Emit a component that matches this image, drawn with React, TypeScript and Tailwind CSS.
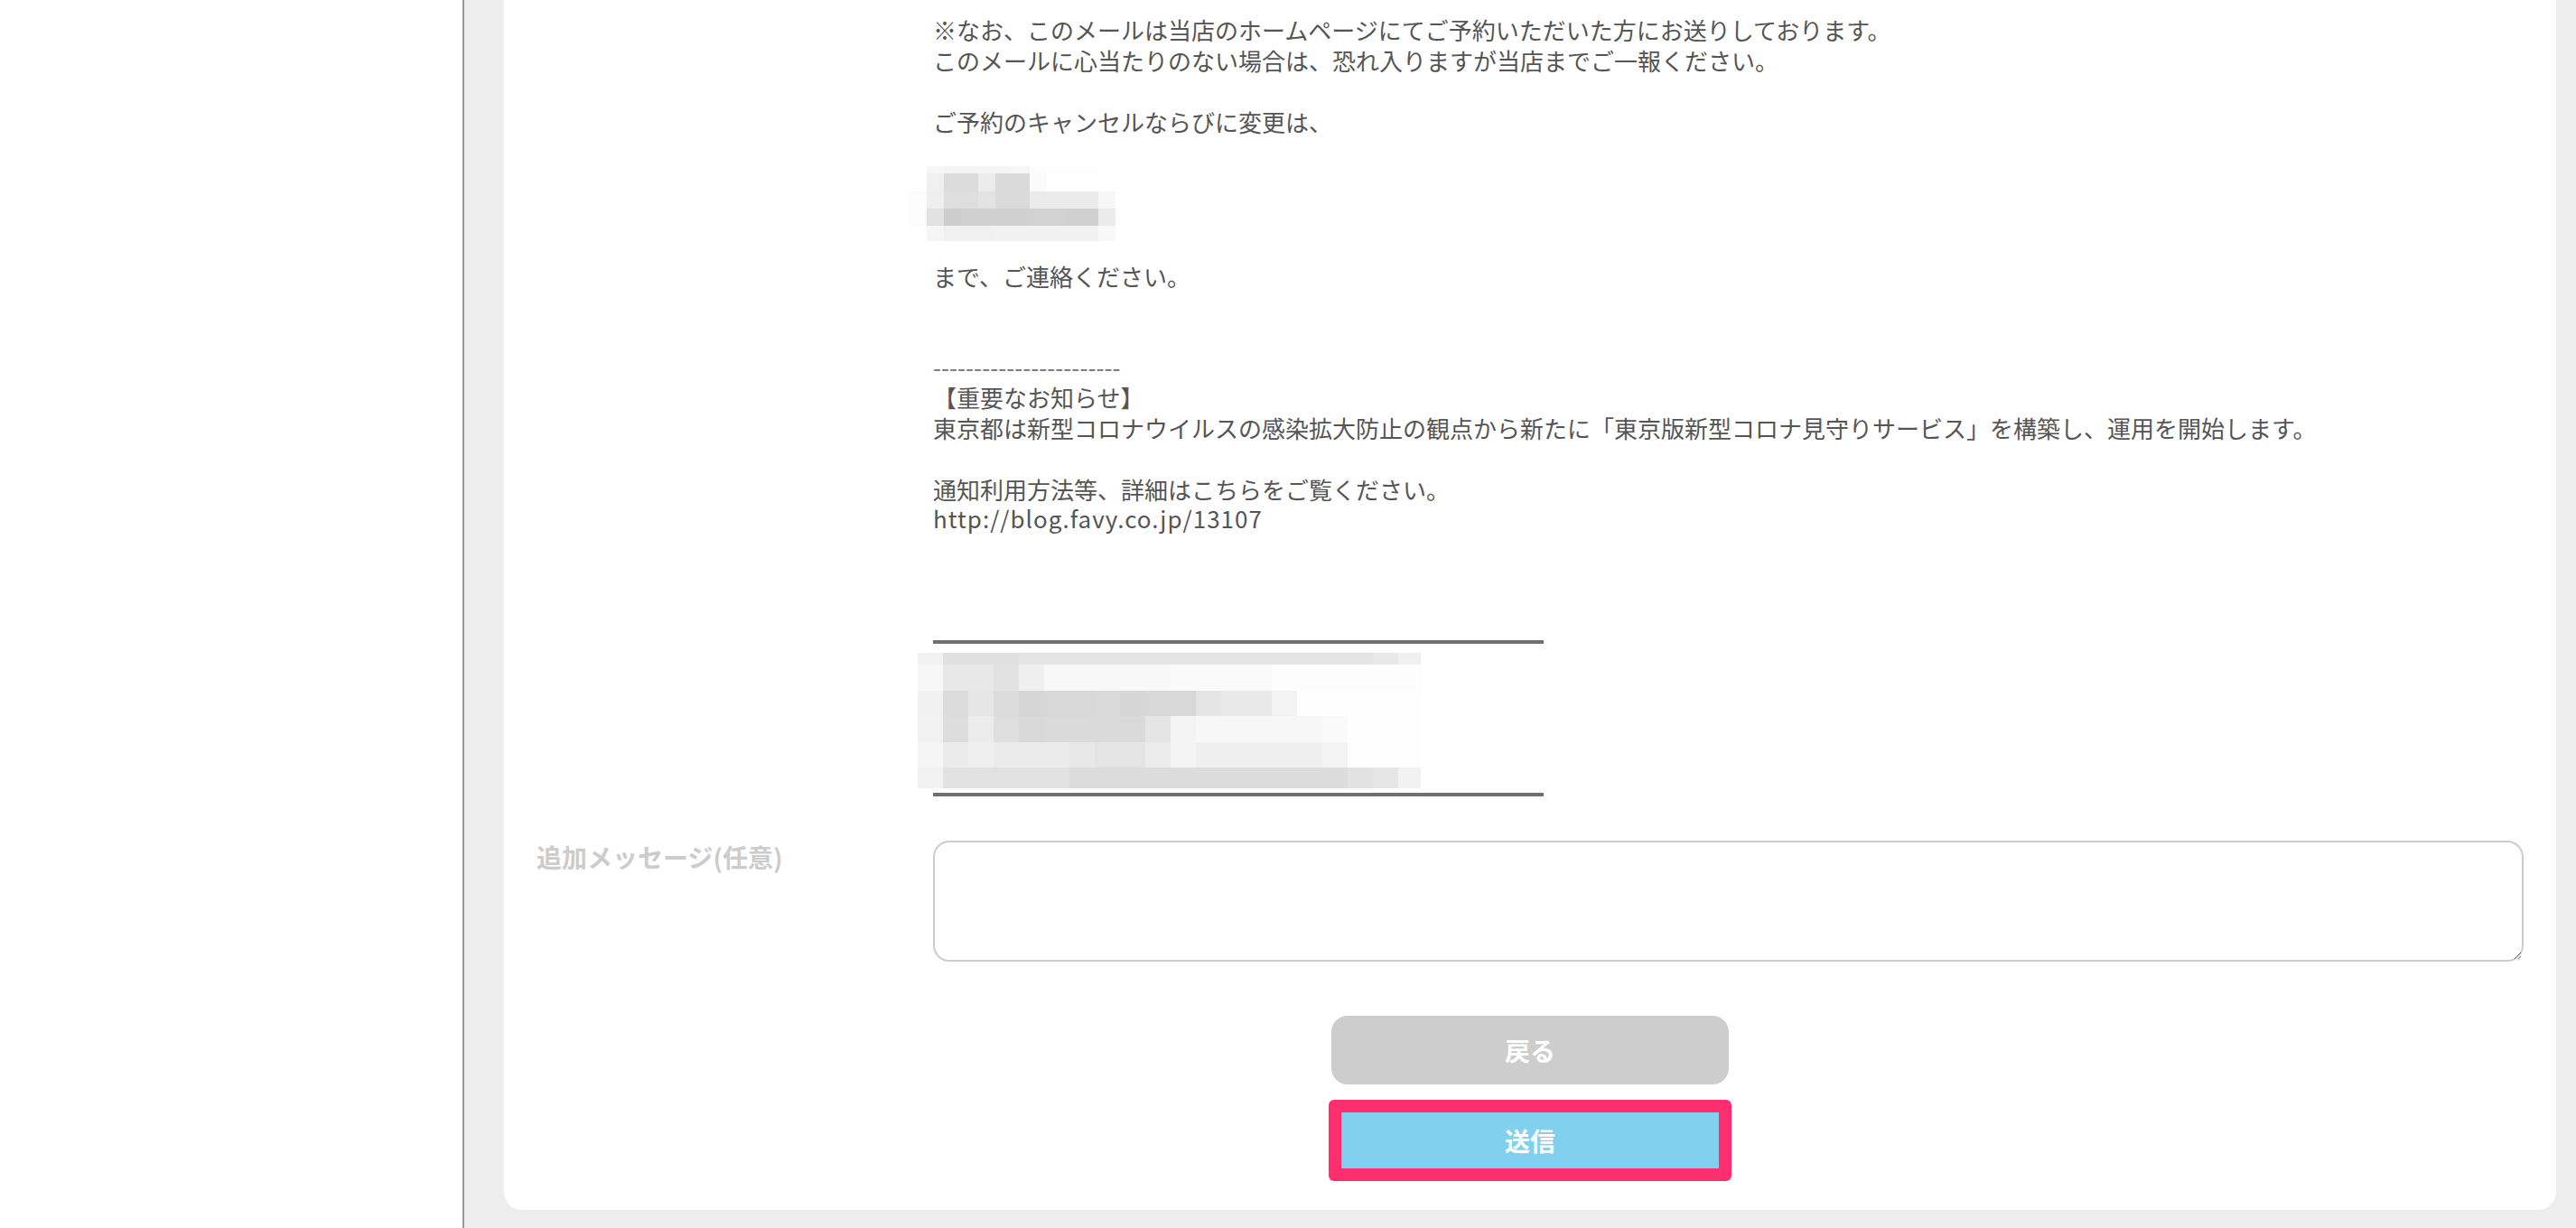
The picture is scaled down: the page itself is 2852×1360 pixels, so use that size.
import React from "react";

const FONT = "font-['Noto_Sans_CJK_JP','Noto_Sans',sans-serif]";

type MosaicProps = {
  cols: number[];
  rows: number[];
  shades: string[][];
  className?: string;
};

// Pixelated redaction block drawn as a grid of grey cells
function Mosaic({ cols, rows, shades, className }: MosaicProps) {
  const width = cols.reduce((a, b) => a + b, 0);
  const height = rows.reduce((a, b) => a + b, 0);
  const cells: React.ReactNode[] = [];
  let y = 0;
  rows.forEach((h, r) => {
    let x = 0;
    cols.forEach((w, c) => {
      const fill = shades[r]?.[c] ?? "#ffffff";
      cells.push(
        <rect key={`${r}-${c}`} x={x} y={y} width={w} height={h} fill={fill} />,
      );
      x += w;
    });
    y += h;
  });
  return (
    <svg
      className={className}
      width={width}
      height={height}
      viewBox={`0 0 ${width} ${height}`}
      shapeRendering="crispEdges"
    >
      {cells}
    </svg>
  );
}

const contactCols = Array(12).fill(19);
const contactRows = [8, 20, 19, 19, 17];
const contactShades = [
  ["#fff", "#f6f6f6", "#f4f4f4", "#f4f4f4", "#f5f5f5", "#f5f5f5", "#f6f6f6", "#fcfcfc", "#fdfdfd", "#fdfdfd", "#fdfdfd", "#fff"],
  ["#fff", "#f0f0f0", "#dcdcdc", "#dcdcdc", "#ececec", "#dadada", "#dadada", "#fbfbfb", "#fff", "#fff", "#fff", "#fff"],
  ["#fcfcfc", "#efefef", "#dedede", "#dedede", "#e3e3e3", "#dadada", "#dadada", "#ebebeb", "#ebebeb", "#ebebeb", "#ebebeb", "#f7f7f7"],
  ["#fcfcfc", "#e2e2e2", "#cdcdcd", "#d0d0d0", "#d0d0d0", "#d0d0d0", "#d0d0d0", "#d2d2d2", "#d2d2d2", "#d0d0d0", "#d0d0d0", "#ebebeb"],
  ["#fff", "#f5f5f5", "#f0f0f0", "#f0f0f0", "#f0f0f0", "#f1f1f1", "#f1f1f1", "#f1f1f1", "#f1f1f1", "#f1f1f1", "#f1f1f1", "#f8f8f8"],
];

const signatureCols = [...Array(19).fill(28), 25];
const signatureRows = [13, 29, 28, 29, 28, 23];
const signatureShades = [
  ["#f2f2f2", "#e0e0e0", "#e0e0e0", "#e0e0e0", "#e4e4e4", "#e4e4e4", "#e4e4e4", "#e4e4e4", "#e4e4e4", "#e4e4e4", "#e4e4e4", "#e4e4e4", "#e4e4e4", "#e4e4e4", "#e4e4e4", "#e4e4e4", "#e4e4e4", "#e4e4e4", "#e8e8e8", "#f0f0f0"],
  ["#f7f7f7", "#e8e8e8", "#e8e8e8", "#e2e2e2", "#efefef", "#f8f8f8", "#f8f8f8", "#f8f8f8", "#f8f8f8", "#f8f8f8", "#fafafa", "#fafafa", "#fafafa", "#fafafa", "#fdfdfd", "#fdfdfd", "#fdfdfd", "#fdfdfd", "#fdfdfd", "#fdfdfd"],
  ["#f1f1f1", "#dbdbdb", "#e6e6e6", "#dcdcdc", "#d6d6d6", "#d8d8d8", "#d8d8d8", "#dadada", "#d6d6d6", "#d8d8d8", "#d8d8d8", "#e4e4e4", "#e9e9e9", "#e9e9e9", "#f3f3f3", "#fefefe", "#fefefe", "#fefefe", "#fefefe", "#fefefe"],
  ["#f2f2f2", "#dddddd", "#ececec", "#dedede", "#d9d9d9", "#dadada", "#dadada", "#dadada", "#dadada", "#e5e5e5", "#f3f3f3", "#f7f7f7", "#f7f7f7", "#f7f7f7", "#f7f7f7", "#f7f7f7", "#fafafa", "#fefefe", "#fefefe", "#fefefe"],
  ["#f5f5f5", "#ebebeb", "#efefef", "#ebebeb", "#ebebeb", "#ebebeb", "#e8e8e8", "#e4e4e4", "#e4e4e4", "#ececec", "#f4f4f4", "#efefef", "#efefef", "#efefef", "#efefef", "#efefef", "#f3f3f3", "#fefefe", "#fefefe", "#fefefe"],
  ["#f2f2f2", "#e1e1e1", "#e1e1e1", "#e1e1e1", "#e1e1e1", "#e1e1e1", "#dcdcdc", "#dcdcdc", "#dcdcdc", "#dcdcdc", "#dcdcdc", "#dcdcdc", "#dcdcdc", "#dcdcdc", "#dcdcdc", "#dcdcdc", "#dcdcdc", "#e2e2e2", "#e6e6e6", "#f2f2f2"],
];

function MailBody() {
  return (
    <div className="flex flex-col text-[26px] leading-[34px] text-[#555555]">
      <p>※なお、このメールは当店のホームページにてご予約いただいた方にお送りしております。</p>
      <p>このメールに心当たりのない場合は、恐れ入りますが当店までご一報ください。</p>
      <p className="mt-[34px]">ご予約のキャンセルならびに変更は、</p>
      <Mosaic
        className="-ml-[26px] mt-[32px] block"
        cols={contactCols}
        rows={contactRows}
        shades={contactShades}
      />
      <p className="mt-[22px]">まで、ご連絡ください。</p>
      <p className="mt-[66px] text-[#777777]">-----------------------</p>
      <p>【重要なお知らせ】</p>
      <p>
        東京都は新型コロナウイルスの感染拡大防止の観点から新たに「東京版新型コロナ見守りサービス」を構築し、運用を開始します。
      </p>
      <p className="mt-[34px]">通知利用方法等、詳細はこちらをご覧ください。</p>
      <p className="leading-[30px] tracking-[1px]">http://blog.favy.co.jp/13107</p>

      <div className="mt-[120px] h-[4px] w-[676px] bg-[#707070]" />
      <Mosaic
        className="-ml-[17px] mt-[10px] block"
        cols={signatureCols}
        rows={signatureRows}
        shades={signatureShades}
      />
      <div className="mt-[5px] h-[4px] w-[676px] bg-[#707070]" />
    </div>
  );
}

export default function App() {
  return (
    <div className={`flex h-[1360px] w-full overflow-hidden bg-white ${FONT}`}>
      <aside className="w-[512px] shrink-0 bg-white" />

      <main className="flex flex-1 flex-col border-l-2 border-[#999999] bg-[#ededed] pb-[20px] pl-[44px] pr-[22px]">
        <section className="flex h-[1340px] flex-col rounded-b-[20px] bg-white px-[36px] pt-[16px]">
          <div className="flex">
            <div className="w-[439px] shrink-0" />
            <div className="flex-1">
              <MailBody />
            </div>
          </div>

          <div className="mt-[49px] flex items-start">
            <label className="w-[439px] shrink-0 text-[28px] font-bold leading-[36px] text-[#cccccc]">
              追加メッセージ(任意)
            </label>
            <textarea className="h-[134px] flex-1 rounded-[18px] border-2 border-[#cccccc] bg-white p-3 text-[26px] outline-none" />
          </div>

          <div className="mt-[60px] flex flex-col items-center">
            <button
              type="button"
              className="flex h-[76px] w-[440px] items-center justify-center rounded-[18px] bg-[#cdcdcd] text-[28px] font-bold text-white"
            >
              戻る
            </button>
            <div className="mt-[17px] h-[90px] w-[446px] rounded-[6px] bg-[#ff2e6e] p-[14px]">
              <button
                type="submit"
                className="flex h-full w-full items-center justify-center bg-[#80d0ee] text-[28px] font-bold text-white"
              >
                送信
              </button>
            </div>
          </div>
        </section>
      </main>
    </div>
  );
}
